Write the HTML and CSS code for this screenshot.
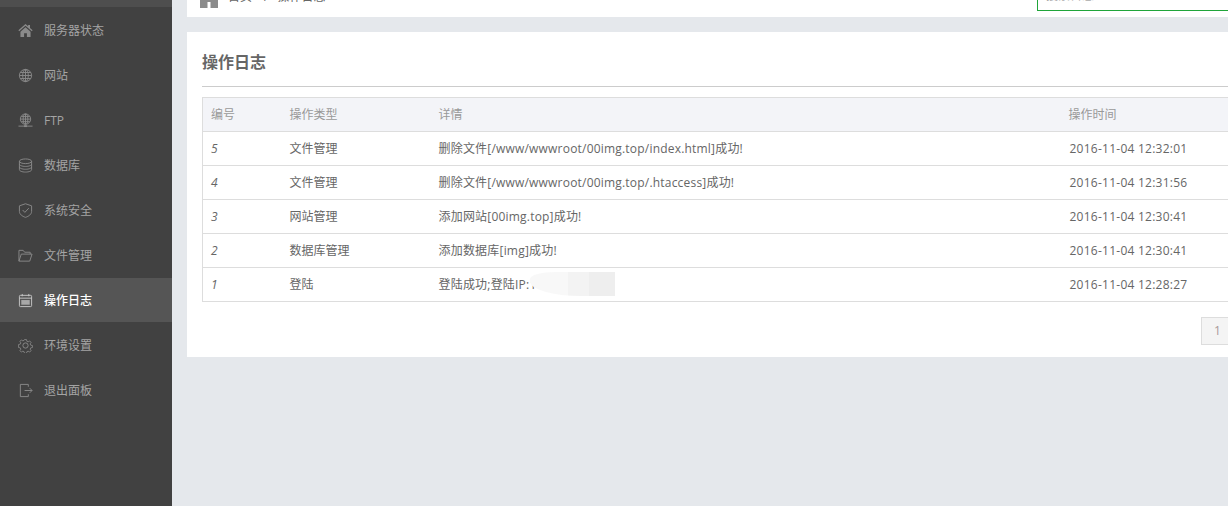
FILE: index.html
```html
<!DOCTYPE html>
<html lang="zh-CN">
<head>
<meta charset="utf-8">
<title>操作日志</title>
<link rel="stylesheet" href="styles.css">
</head>
<body>
<div class="app">
  <aside class="sidebar">
    <div class="side-top"></div>
    <nav class="menu">
      <a class="item"><svg class="ico" viewBox="0 0 16 16"><path class="fill" d="M8 1 .4 7.800l.9 1L8 2.900l6.700 5.900.9-1L12.800 5.300V2h-2v1.500zM2.600 9.400 8 4.600l5.400 4.800V15H9.500v-4h-3v4H2.600z"/></svg><span>服务器状态</span></a>
      <a class="item"><svg class="ico" viewBox="0 0 16 16"><circle cx="8" cy="8" r="6.500"/><ellipse cx="8" cy="8" rx="3" ry="6.500"/><path d="M8 1.500v13M1.500 8h13M2.500 4.800h11M2.500 11.200h11"/></svg><span>网站</span></a>
      <a class="item"><svg class="ico" viewBox="0 0 16 16"><circle cx="8" cy="6.500" r="5.500"/><ellipse cx="8" cy="6.500" rx="2.500" ry="5.500"/><path d="M8 1v11M2.500 6.500h11M3.500 3.800h9M3.500 9.200h9M.5 14h15"/><path class="fill" d="M6.500 13h3v2h-3z"/></svg><span>FTP</span></a>
      <a class="item"><svg class="ico" viewBox="0 0 16 16"><ellipse cx="8" cy="3.500" rx="6.500" ry="2.500"/><path d="M1.500 3.500v9c0 1.400 2.900 2.500 6.500 2.500s6.500-1.100 6.500-2.500v-9M1.500 6.500C1.500 7.900 4.400 9 8 9s6.500-1.100 6.500-2.500M1.500 9.500C1.500 10.900 4.400 12 8 12s6.500-1.100 6.500-2.500"/></svg><span>数据库</span></a>
      <a class="item"><svg class="ico" viewBox="0 0 16 16"><path d="M8 .8 14.500 3v6c0 3-3 5.200-6.500 6.300C4.500 14.200 1.500 12 1.500 9V3z"/><path d="m5 7.500 2.300 2.500L11.500 5.500"/></svg><span>系统安全</span></a>
      <a class="item"><svg class="ico" viewBox="0 0 16 16"><path d="M1 14V2.500h4.500l1.500 2h6v2M1 14h11.500L15 6.500H3.500z"/></svg><span>文件管理</span></a>
      <a class="item active"><svg class="ico" viewBox="0 0 16 16"><rect x="1.500" y="2.500" width="13" height="12" rx="1"/><path d="M1.500 5.500h13M4.500 1v2.500M11.500 1v2.500"/><path class="fill" d="M3.500 7.500h9v5h-9z"/></svg><span>操作日志</span></a>
      <a class="item"><svg class="ico" viewBox="0 0 16 16"><circle cx="8" cy="8" r="2.800"/><path d="M6.800 1h2.400l.4 2 1.500.7 1.800-1.100 1.700 1.700-1.100 1.800.7 1.500 2 .4v2.400l-2 .4-.7 1.500 1.100 1.800-1.700 1.700-1.800-1.100-1.500.7-.4 2H6.800l-.4-2-1.500-.7-1.800 1.100-1.700-1.700 1.100-1.800-.7-1.500-2-.4V6.800l2-.4.7-1.500-1.100-1.800 1.700-1.700 1.800 1.100 1.500-.7z" transform="translate(.8 .8) scale(.9)"/></svg><span>环境设置</span></a>
      <a class="item"><svg class="ico" viewBox="0 0 16 16"><path d="M11 4V1.500H2.500v13H11V12M7 8h8M12.500 5.500 15 8l-2.500 2.500"/></svg><span>退出面板</span></a>
    </nav>
  </aside>
  <main class="main">
    <header class="topbar">
      <div class="crumbs">
        <svg class="crumb-home" viewBox="0 0 18 18"><path d="M9 0 0 8v10h7.500v-6h3v6H18V8z"/></svg>
        <span class="crumb-link">首页</span>
        <span class="crumb-sep">/</span>
        <span class="crumb-link">操作日志</span>
      </div>
      <div class="search">搜索日志..</div>
    </header>
    <section class="card">
      <h2 class="title">操作日志</h2>
      <table class="log">
        <colgroup><col class="c1"><col class="c2"><col class="c3"><col></colgroup>
        <thead>
          <tr><th>编号</th><th>操作类型</th><th>详情</th><th>操作时间</th></tr>
        </thead>
        <tbody>
          <tr><td class="num">5</td><td>文件管理</td><td class="detail">删除文件[/www/wwwroot/00img.top/index.html]成功!</td><td class="time">2016-11-04 12:32:01</td></tr>
          <tr><td class="num">4</td><td>文件管理</td><td class="detail">删除文件[/www/wwwroot/00img.top/.htaccess]成功!</td><td class="time">2016-11-04 12:31:56</td></tr>
          <tr><td class="num">3</td><td>网站管理</td><td class="detail">添加网站[00img.top]成功!</td><td class="time">2016-11-04 12:30:41</td></tr>
          <tr><td class="num">2</td><td>数据库管理</td><td class="detail">添加数据库[img]成功!</td><td class="time">2016-11-04 12:30:41</td></tr>
          <tr><td class="num">1</td><td>登陆</td><td class="detail"><span class="ip">登陆成功;登陆IP:1<i class="blur"></i></span></td><td class="time">2016-11-04 12:28:27</td></tr>
        </tbody>
      </table>
      <div class="pager"><span class="page">1</span></div>
    </section>
  </main>
</div>
</body>
</html>
```
FILE: styles.css
```css
* { box-sizing: border-box; }
html, body { margin: 0; height: 100%; overflow: hidden; }
body {
  font-family: "Open Sans", "Noto Sans CJK SC", sans-serif;
  font-size: 12px;
  color: #555;
  background: #e5e8ec;
}
.app { display: flex; height: 506px; width: 1228px; overflow: hidden; }

.sidebar { flex: 0 0 172px; background: #414141; }
.side-top { height: 7px; background: #4e4e4e; }
.menu { display: flex; flex-direction: column; padding-top: 1px; }
.item {
  display: flex;
  align-items: center;
  height: 45px;
  padding-left: 18px;
  color: #a4a4a4;
  gap: 11px;
}
.item span { margin-bottom: 2px; }
.item:nth-child(3) span,
.item:nth-child(7) span,
.item:nth-child(8) span { margin-bottom: 0; }
.item:nth-child(7) { height: 44px; }
.item:nth-child(8) { height: 46px; }
.item.active { background: #555; color: #fff; font-weight: 500; }
.ico {
  flex: none;
  width: 15px;
  height: 15px;
  fill: none;
  stroke: #8a8a8a;
  stroke-width: 1;
}
.ico .fill { fill: #8a8a8a; stroke: none; }
.item.active .ico { stroke: #c8c8c8; }
.item.active .ico .fill { fill: #a8a8a8; }

.main { flex: 1; min-width: 0; padding-left: 15px; }
.topbar {
  height: 17px;
  background: #fff;
  overflow: hidden;
  position: relative;
  display: flex;
  justify-content: space-between;
  align-items: flex-end;
  margin-bottom: 15px;
}
.crumbs {
  display: flex;
  align-items: center;
  height: 20px;
  margin-bottom: 11px;
  padding-left: 13px;
  color: #666;
}
.crumb-home { width: 18px; height: 18px; fill: #8b8b8b; margin-right: 10px; position: relative; top: 3px; }
.crumb-sep { margin: 0 9px 0 12px; }
.search {
  width: 200px;
  height: 30px;
  margin-bottom: 6px;
  margin-right: -9px;
  border: 1px solid #20a53a;
  padding: 5px 0 0 8px;
  color: #aaa;
  line-height: 18px;
  background: #fff;
}

.card { background: #fff; height: 325px; padding: 15px 0 0 15px; overflow: hidden; }
.title {
  margin: 0 0 10px;
  height: 40px;
  line-height: 30px;
  font-size: 16px;
  font-weight: 700;
  color: #666;
  border-bottom: 1px solid #ccc;
  padding-bottom: 9px;
}
.log {
  border-collapse: collapse;
  table-layout: fixed;
  width: calc(100% + 5px);
}
.c1 { width: 79px; }
.c2 { width: 149px; }
.c3 { width: 630px; }
.log th, .log td {
  height: 34px;
  padding: 0 8px 2px;
  border: 1px solid #ddd;
  border-left: 0;
  border-right: 0;
  text-align: left;
  white-space: nowrap;
}
.log tr > :first-child { border-left: 1px solid #ddd; }
.log th { background: #f3f4f8; color: #999; font-weight: 400; }
.log td { color: #666; }
.log .num { font-style: italic; padding-bottom: 0; }
.log .detail { letter-spacing: .2px; }
.log .time { letter-spacing: .25px; padding: 0 8px 0 9px; }
.ip { position: relative; display: inline-block; }
.blur {
  position: absolute;
  left: 91px;
  top: -3px;
  width: 85px;
  height: 24px;
  border-radius: 30% 0 0 60%;
  background: linear-gradient(90deg, #f8f8f8 0, #f8f8f8 45%, #f3f3f3 45%, #f3f3f3 70%, #eeeeee 70%, #eeeeee 100%);
}
.pager { display: flex; justify-content: flex-end; margin: 15px -10px 0 0; }
.page {
  width: 37px;
  height: 28px;
  padding-left: 12px;
  line-height: 26px;
  border: 1px solid #ddd;
  background: #f4f4f4;
  color: #a99;
}
```
